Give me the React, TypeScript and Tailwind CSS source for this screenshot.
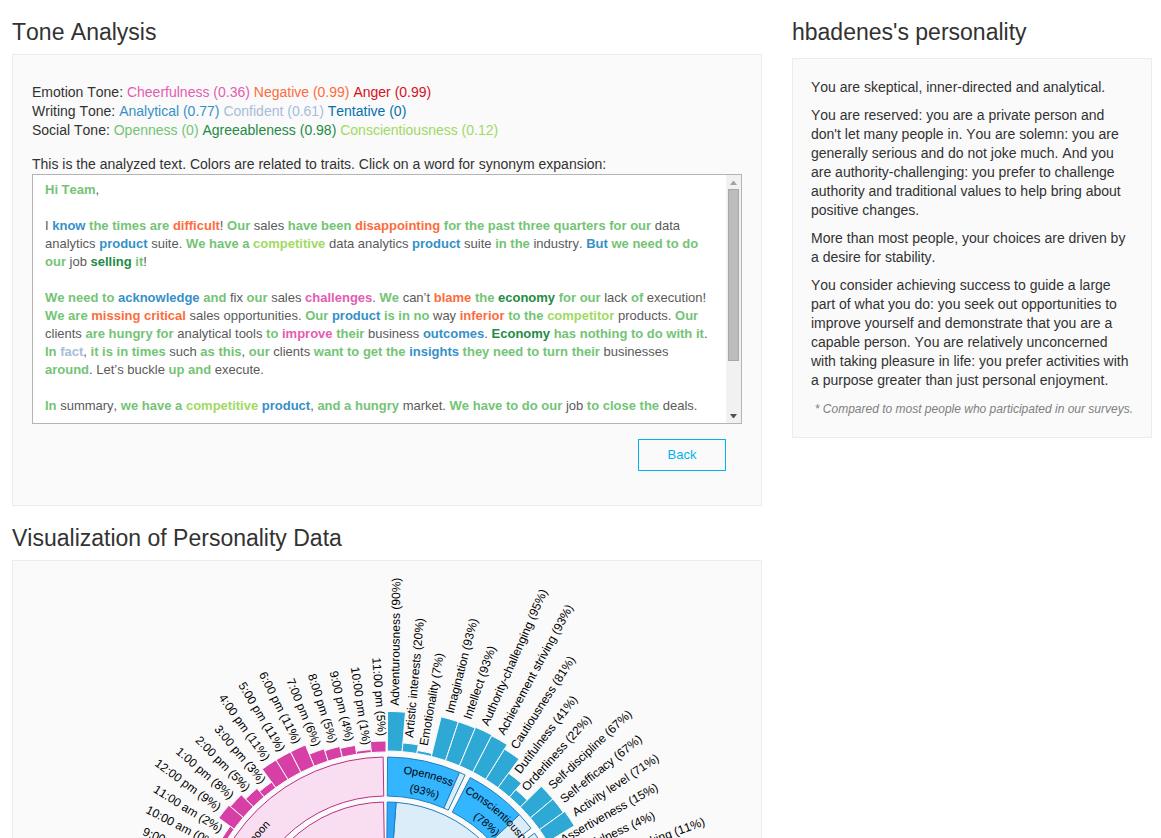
import React from "react";

type Tone = "plain" | "open" | "agree" | "consc" | "anal" | "conf" | "neg" | "cheer";

const toneClass: Record<Tone, string> = {
  plain: "",
  open: "font-bold text-[#74c476]",
  agree: "font-bold text-[#238b45]",
  consc: "font-bold text-[#a1d964]",
  anal: "font-bold text-[#3690c8]",
  conf: "font-bold text-[#a6bddb]",
  neg: "font-bold text-[#fc6c3d]",
  cheer: "font-bold text-[#e45cb0]",
};

const paragraphs: [Tone, string][][] = [
  [["open", "Hi Team"], ["plain", ","]],
  [
    ["plain", "I "], ["anal", "know"], ["open", " the times are "], ["neg", "difficult"], ["plain", "! "], ["open", "Our"],
    ["plain", " sales "], ["open", "have been "], ["neg", "disappointing"], ["open", " for the past three quarters for our"],
    ["plain", " data analytics "], ["anal", "product"], ["plain", " suite. "], ["open", "We have a "], ["consc", "competitive"],
    ["plain", " data analytics "], ["anal", "product"], ["plain", " suite "], ["open", "in the"], ["plain", " industry. "],
    ["anal", "But"], ["open", " we need to do our"], ["plain", " job "], ["agree", "selling"], ["open", " it"], ["plain", "!"],
  ],
  [
    ["open", "We need to "], ["anal", "acknowledge"], ["open", " and"], ["plain", " fix "], ["open", "our"], ["plain", " sales "],
    ["cheer", "challenges"], ["plain", ". "], ["open", "We"], ["plain", " can’t "], ["neg", "blame"], ["open", " the "],
    ["agree", "economy"], ["open", " for our"], ["plain", " lack "], ["open", "of"], ["plain", " execution! "],
    ["open", "We are "], ["neg", "missing critical"], ["plain", " sales opportunities. "], ["open", "Our "], ["anal", "product"],
    ["open", " is in no"], ["plain", " way "], ["neg", "inferior"], ["open", " to the "], ["consc", "competitor"],
    ["plain", " products. "], ["open", "Our"], ["plain", " clients "], ["open", "are hungry for"], ["plain", " analytical tools "],
    ["open", "to "], ["cheer", "improve"], ["open", " their"], ["plain", " business "], ["anal", "outcomes"], ["plain", ". "],
    ["agree", "Economy"], ["open", " has nothing to do with it"], ["plain", ". "], ["open", "In "], ["conf", "fact"], ["plain", ", "],
    ["open", "it is in times"], ["plain", " such "], ["open", "as this"], ["plain", ", "], ["open", "our"], ["plain", " clients "],
    ["open", "want to get the "], ["anal", "insights"], ["open", " they need to turn their"], ["plain", " businesses "],
    ["open", "around"], ["plain", ". Let’s buckle "], ["open", "up and"], ["plain", " execute."],
  ],
  [
    ["open", "In"], ["plain", " summary, "], ["open", "we have a "], ["consc", "competitive"], ["anal", " product"], ["plain", ", "],
    ["open", "and a hungry"], ["plain", " market. "], ["open", "We have to do our"], ["plain", " job "], ["open", "to close the"],
    ["plain", " deals."],
  ],
];

const CX = 373;
const CY = 379;
const STEP = 4.49;
const BASE = 189;

const traits: [string, number][] = [
  ["Adventurousness", 90], ["Artistic interests", 20], ["Emotionality", 7], ["Imagination", 93], ["Intellect", 93],
  ["Authority-challenging", 95], ["Achievement striving", 93], ["Cautiousness", 81], ["Dutifulness", 41],
  ["Orderliness", 22], ["Self-discipline", 67], ["Self-efficacy", 67], ["Activity level", 71], ["Assertiveness", 15],
  ["Cheerfulness", 4], ["Excitement-seeking", 11],
];

const hours: [string, number][] = [
  ["11:00 pm", 5], ["10:00 pm", 1], ["9:00 pm", 4], ["8:00 pm", 5], ["7:00 pm", 6], ["6:00 pm", 11], ["5:00 pm", 11],
  ["4:00 pm", 11], ["3:00 pm", 3], ["2:00 pm", 5], ["1:00 pm", 8], ["12:00 pm", 9], ["11:00 am", 2], ["10:00 am", 0],
  ["9:00 am", 0],
];

function point(r: number, deg: number): [number, number] {
  const a = (deg * Math.PI) / 180;
  return [CX + r * Math.sin(a), CY - r * Math.cos(a)];
}

function sector(r0: number, r1: number, a0: number, a1: number): string {
  const [x0, y0] = point(r1, a0);
  const [x1, y1] = point(r1, a1);
  const [x2, y2] = point(r0, a1);
  const [x3, y3] = point(r0, a0);
  return `M${x0} ${y0}A${r1} ${r1} 0 0 1 ${x1} ${y1}L${x2} ${y2}A${r0} ${r0} 0 0 0 ${x3} ${y3}Z`;
}

function arc(r: number, a0: number, a1: number): string {
  const [x0, y0] = point(r, a0);
  const [x1, y1] = point(r, a1);
  return `M${x0} ${y0}A${r} ${r} 0 0 1 ${x1} ${y1}`;
}

function Ring({ r0, r1, a0, a1, fill, stroke }: { r0: number; r1: number; a0: number; a1: number; fill: string; stroke: string }) {
  return <path d={sector(r0, r1, a0, a1)} fill={fill} stroke={stroke} />;
}

function ArcLabel({ id, r, a0, a1, text, start }: { id: string; r: number; a0: number; a1: number; text: string; start?: boolean }) {
  return (
    <>
      <path id={id} d={arc(r, a0, a1)} fill="none" />
      <text fontSize="11" textAnchor={start ? "start" : "middle"}>
        <textPath href={`#${id}`} startOffset={start ? "0%" : "50%"}>{text}</textPath>
      </text>
    </>
  );
}

function Sunburst() {
  const blue = "#33b5ff";
  const paleBlue = "#dcedfa";
  const blueLine = "#1f80bd";
  const palePink = "#f8def0";
  const pinkLine = "#bb2f88";
  return (
    <svg viewBox="0 0 748 380" className="block h-auto w-full" role="img" aria-label="Personality sunburst chart" fontFamily='"Liberation Sans", Arial, sans-serif' fill="#000">
      {traits.map(([name, value], i) => {
        const a = 0.4 + i * STEP;
        const mid = a + STEP / 2;
        const r = BASE + value * 0.44;
        const [x, y] = point(r + 6, mid + 0.5);
        return (
          <g key={name}>
            <path d={sector(BASE, r, a, a + STEP)} fill="#2ea8d5" stroke="#fafafa" />
            <text fontSize="12" transform={`translate(${x} ${y}) rotate(${mid - 92 + i * 0.12})`}>{`${name} (${value}%)`}</text>
          </g>
        );
      })}
      {hours.map(([name, value], i) => {
        const a = -(i + 1) * STEP;
        const mid = a + STEP / 2;
        const r = BASE + value * 2;
        const [x, y] = point(r + 5, mid - i * 0.1);
        return (
          <g key={name}>
            {value > 0 && <path d={sector(BASE - 1, r, a, a + STEP)} fill="#d63fa6" stroke="#fafafa" />}
            <text fontSize="12" textAnchor="end" transform={`translate(${x} ${y}) rotate(${mid + 88})`}>{`${name} (${value}%)`}</text>
          </g>
        );
      })}
      <Ring r0={144} r1={183} a0={-88} a1={-0.9} fill={palePink} stroke={pinkLine} />
      <Ring r0={98} r1={138} a0={-88} a1={-1} fill={palePink} stroke={pinkLine} />
      <Ring r0={144} r1={183} a0={0.5} a1={23.7} fill={blue} stroke={blueLine} />
      <Ring r0={144} r1={183} a0={23.7} a1={25.6} fill={paleBlue} stroke={blueLine} />
      <Ring r0={144} r1={183} a0={27.4} a1={46.8} fill={blue} stroke={blueLine} />
      <Ring r0={144} r1={183} a0={46.8} a1={52.4} fill={paleBlue} stroke={blueLine} />
      <Ring r0={144} r1={183} a0={54.3} a1={66} fill={paleBlue} stroke={blueLine} />
      <Ring r0={98} r1={138} a0={4.2} a1={88} fill={paleBlue} stroke={blueLine} />
      <Ring r0={98} r1={138} a0={0.5} a1={4.2} fill="#2ea6fb" stroke={blueLine} />
      <ArcLabel id="arc-openness" r={167} a0={0} a1={29} text="Openness" />
      <ArcLabel id="arc-openness-value" r={150} a0={0} a1={29} text="(93%)" />
      <ArcLabel id="arc-conscientiousness" r={167} a0={28} a1={66} text="Conscientiousness" start />
      <ArcLabel id="arc-conscientiousness-value" r={150} a0={26} a1={56} text="(78%)" />
      <ArcLabel id="arc-afternoon" r={163} a0={-76} a1={-31} text="Afternoon" />
      <ArcLabel id="arc-afternoon-value" r={147} a0={-76} a1={-31} text="(59%)" />
    </svg>
  );
}

function Heading({ children }: { children: React.ReactNode }) {
  return <h2 className="text-[23px] leading-8 text-[#323232]">{children}</h2>;
}

function ScrollTrack() {
  return (
    <div aria-hidden="true" className="flex w-[15px] shrink-0 flex-col items-center bg-[#f1f1f1]">
      <svg viewBox="0 0 15 14" className="h-[14px] w-[15px]"><path d="M4 10h7L8 6H7z" fill="#a3a3a3" /></svg>
      <div className="h-[172px] w-[11px] border border-[#a8a8a8] bg-[#bcbcbc]" />
      <svg viewBox="0 0 15 14" className="mt-auto h-[14px] w-[15px]"><path d="M4 5h7L8 9H7z" fill="#505050" /></svg>
    </div>
  );
}

export default function App() {
  return (
    <main className="flex h-screen gap-[30px] overflow-y-auto bg-white pt-4 pr-[9px] pl-3 text-sm leading-[19px] text-[#323232] [font-family:'Liberation_Sans',Arial,sans-serif] [font-kerning:none] [scrollbar-width:none]">
      <div className="min-w-0 flex-1">
        <section>
          <Heading>Tone Analysis</Heading>
          <div className="mt-[6px] border border-[#ececec] bg-[#fafafa] px-[19px] pt-7 pb-[34px]">
            <p>
              Emotion Tone: <span className="text-[#e45cb0]">Cheerfulness (0.36)</span>{" "}
              <span className="text-[#fc6c3d]">Negative (0.99)</span> <span className="text-[#d7101c]">Anger (0.99)</span>
            </p>
            <p>
              Writing Tone: <span className="text-[#3690c8]">Analytical (0.77)</span>{" "}
              <span className="text-[#a6bddb]">Confident (0.61)</span> <span className="text-[#0570b0]">Tentative (0)</span>
            </p>
            <p>
              Social Tone: <span className="text-[#74c476]">Openness (0)</span>{" "}
              <span className="text-[#238b45]">Agreeableness (0.98)</span>{" "}
              <span className="text-[#a1d964]">Conscientiousness (0.12)</span>
            </p>
            <p className="mt-[15px]">This is the analyzed text. Colors are related to traits. Click on a word for synonym expansion:</p>
            <div className="flex h-[250px] border border-[#b4b4b4] bg-white">
              <div className="flex min-w-0 flex-1 flex-col gap-[18px] overflow-hidden px-3 pt-[6px] text-[13px] leading-[18px] text-[#5a5a5a]">
                {paragraphs.map((runs, i) => (
                  <p key={i}>
                    {runs.map(([tone, text], j) => (
                      <span key={j} className={toneClass[tone]}>{text}</span>
                    ))}
                  </p>
                ))}
              </div>
              <ScrollTrack />
            </div>
            <div className="mt-[15px] flex justify-end pr-4">
              <button type="button" className="h-8 w-[88px] border border-[#00b4f0] pb-0.5 text-[13px] text-[#00b4f0]">Back</button>
            </div>
          </div>
        </section>
        <section className="mt-4">
          <Heading>Visualization of Personality Data</Heading>
          <div className="mt-[6px] border border-[#ececec] bg-[#fafafa]">
            <Sunburst />
          </div>
        </section>
      </div>
      <aside className="w-[360px] shrink-0">
        <Heading>hbadenes's personality</Heading>
        <div className="mt-[10px] flex flex-col gap-[9px] border border-[#ececec] bg-[#fafafa] px-[18px] pt-[19px] pb-[18px]">
          <p>You are skeptical, inner-directed and analytical.</p>
          <p>
            You are reserved: you are a private person and don't let many people in. You are solemn: you are generally serious and
            do not joke much. And you are authority-challenging: you prefer to challenge authority and traditional values to help
            bring about positive changes.
          </p>
          <p>More than most people, your choices are driven by a desire for stability.</p>
          <p>
            You consider achieving success to guide a large part of what you do: you seek out opportunities to improve yourself and
            demonstrate that you are a capable person. You are relatively unconcerned with taking pleasure in life: you prefer
            activities with a purpose greater than just personal enjoyment.
          </p>
          <p className="text-right text-xs leading-5 text-[#808080] italic">* Compared to most people who participated in our surveys.</p>
        </div>
      </aside>
    </main>
  );
}
